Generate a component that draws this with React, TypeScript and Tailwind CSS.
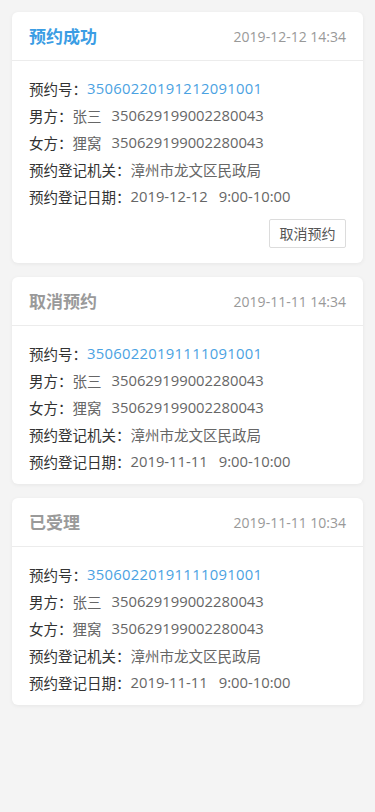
const cjk = "font-['Noto_Sans_CJK_SC',sans-serif]"

type Record = {
  status: string
  active: boolean
  time: string
  no: string
  man: string
  woman: string
  id: string
  office: string
  date: string
  slot: string
  cancellable?: boolean
}

const records: Record[] = [
  {
    status: '预约成功',
    active: true,
    time: '2019-12-12 14:34',
    no: '35060220191212091001',
    man: '张三',
    woman: '狸窝',
    id: '350629199002280043',
    office: '漳州市龙文区民政局',
    date: '2019-12-12',
    slot: '9:00-10:00',
    cancellable: true,
  },
  {
    status: '取消预约',
    active: false,
    time: '2019-11-11 14:34',
    no: '35060220191111091001',
    man: '张三',
    woman: '狸窝',
    id: '350629199002280043',
    office: '漳州市龙文区民政局',
    date: '2019-11-11',
    slot: '9:00-10:00',
  },
  {
    status: '已受理',
    active: false,
    time: '2019-11-11 10:34',
    no: '35060220191111091001',
    man: '张三',
    woman: '狸窝',
    id: '350629199002280043',
    office: '漳州市龙文区民政局',
    date: '2019-11-11',
    slot: '9:00-10:00',
  },
]

function Num({ children, className = '' }: { children: React.ReactNode; className?: string }) {
  return (
    <span className={`font-['Open_Sans','Noto_Sans_CJK_SC',sans-serif] text-[14.8px] ${className}`}>
      {children}
    </span>
  )
}

function Row({ label, children }: { label: string; children: React.ReactNode }) {
  return (
    <div className="flex h-[27px] items-center whitespace-nowrap">
      <span className="text-[#333]">{label}：</span>
      <span className="flex items-center text-[#666]">{children}</span>
    </div>
  )
}

function Card({ r }: { r: Record }) {
  return (
    <div className="rounded-[6px] bg-white shadow-[0_1px_4px_rgba(0,0,0,0.06)]">
      {/* header */}
      <div className="flex h-[49px] items-center justify-between border-b border-[#ececec] px-[17px]">
        <span className={`text-[17px] font-bold ${r.active ? 'text-[#3b9de4]' : 'text-[#9a9a9a]'}`}>
          {r.status}
        </span>
        <span className="font-['Open_Sans',sans-serif] text-[14px] text-[#999]">{r.time}</span>
      </div>

      {/* body */}
      <div className={`px-[17px] pt-[14px] ${r.cancellable ? 'pb-[15px]' : 'pb-[9px]'}`}>
        <Row label="预约号">
          <Num className="tracking-[0.3px] text-[#4aa2e2]">{r.no}</Num>
        </Row>
        <Row label="男方">
          <span>{r.man}</span>
          <Num className="ml-[10px]">{r.id}</Num>
        </Row>
        <Row label="女方">
          <span>{r.woman}</span>
          <Num className="ml-[10px]">{r.id}</Num>
        </Row>
        <Row label="预约登记机关">
          <span>{r.office}</span>
        </Row>
        <Row label="预约登记日期">
          <Num>{r.date}</Num>
          <Num className="ml-[11px]">{r.slot}</Num>
        </Row>

        {r.cancellable && (
          <div className="mt-[9px] flex justify-end">
            <button className="flex h-[29px] w-[77px] items-center justify-center rounded-[2px] border border-[#dcdcdc] bg-white text-[14px] text-[#555]">
              取消预约
            </button>
          </div>
        )}
      </div>
    </div>
  )
}

export default function App() {
  return (
    <div className={`min-h-screen bg-[#f4f4f4] px-3 pt-3 text-[14.5px] ${cjk}`}>
      <div className="flex flex-col gap-[14px]">
        {records.map((r, i) => (
          <Card key={i} r={r} />
        ))}
      </div>
    </div>
  )
}
